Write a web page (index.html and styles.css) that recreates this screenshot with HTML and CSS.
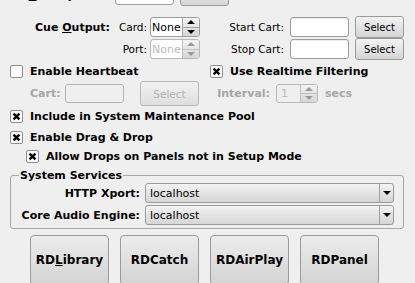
FILE: index.html
```html
<!DOCTYPE html>
<html lang="en">
<head>
    <meta charset="UTF-8">
    <title>Edit Station</title>
    <link rel="stylesheet" href="styles.css">
</head>
<body>
    <div id="stationDialog">
        <div class="row rowTop">
            <div class="fieldLabel"><u>S</u>tartup Cart:</div>
            <div class="textBox startupEdit"></div>
            <div class="pushButton startupSelect">Select</div>
        </div>
        <div class="row cueRow">
            <div class="fieldLabel">Cue <u>O</u>utput:</div>
            <div class="subLabel">Card:</div>
            <div class="spinBox cueSpin">
                <span class="spinValue">None</span>
                <span class="spinArrows"><span class="spinUp"></span><span class="spinDown"></span></span>
            </div>
            <div class="cartLabel">Start Cart:</div>
            <div class="textBox cartEdit"></div>
            <div class="pushButton cartSelect">Select</div>
        </div>
        <div class="row cueRow portRow">
            <div class="fieldLabel"></div>
            <div class="subLabel">Port:</div>
            <div class="spinBox cueSpin disabled">
                <span class="spinValue">None</span>
                <span class="spinArrows"><span class="spinUp"></span><span class="spinDown"></span></span>
            </div>
            <div class="cartLabel">Stop Cart:</div>
            <div class="textBox cartEdit"></div>
            <div class="pushButton cartSelect">Select</div>
        </div>
        <div class="row heartbeatRow">
            <div class="checkItem">
                <span class="checkBox"></span>
                <span>Enable Heartbeat</span>
            </div>
            <div class="checkItem">
                <span class="checkBox checked"><svg viewBox="0 0 13 13" width="11" height="11"><path d="M3 3 L10 10 M10 3 L3 10" /></svg></span>
                <span>Use Realtime Filtering</span>
            </div>
        </div>
        <div class="row cartRow">
            <div class="dimLabel hbCartLabel">Cart:</div>
            <div class="textBox hbCartEdit"></div>
            <div class="pushButton hbSelect disabled">Select</div>
            <div class="dimLabel intervalLabel">Interval:</div>
            <div class="spinBox intervalSpin disabled">
                <span class="spinValue">1</span>
                <span class="spinArrows"><span class="spinUp"></span><span class="spinDown"></span></span>
            </div>
            <div class="dimLabel secsLabel">secs</div>
        </div>
        <div class="row checkRow includeRow">
            <div class="checkItem">
                <span class="checkBox checked"><svg viewBox="0 0 13 13" width="11" height="11"><path d="M3 3 L10 10 M10 3 L3 10" /></svg></span>
                <span>Include in System Maintenance Pool</span>
            </div>
        </div>
        <div class="row checkRow dragRow">
            <div class="checkItem">
                <span class="checkBox checked"><svg viewBox="0 0 13 13" width="11" height="11"><path d="M3 3 L10 10 M10 3 L3 10" /></svg></span>
                <span>Enable Drag &amp; Drop</span>
            </div>
        </div>
        <div class="row checkRow allowRow">
            <div class="checkItem">
                <span class="checkBox checked"><svg viewBox="0 0 13 13" width="11" height="11"><path d="M3 3 L10 10 M10 3 L3 10" /></svg></span>
                <span>Allow Drops on Panels not in Setup Mode</span>
            </div>
        </div>
        <fieldset class="servicesGroup">
            <legend>System Services</legend>
            <div class="servicesGrid">
                <div class="serviceLabel">HTTP Xport:</div>
                <div class="comboBox"><span class="comboValue">localhost</span><span class="comboArrow"></span></div>
                <div class="serviceLabel">Core Audio Engine:</div>
                <div class="comboBox"><span class="comboValue">localhost</span><span class="comboArrow"></span></div>
            </div>
        </fieldset>
        <div class="appButtons">
            <div class="appButton">RD<u>L</u>ibrary</div>
            <div class="appButton">RDCatch</div>
            <div class="appButton">RDAirPlay</div>
            <div class="appButton">RDPanel</div>
        </div>
    </div>
</body>
</html>
```

FILE: styles.css
```css
body {
    margin: 0;
    background-color: #efefef;
    font-family: 'DejaVu Sans', 'Noto Sans', sans-serif;
    font-size: 11px;
    color: #000000;
    overflow: hidden;
}
#stationDialog {
    display: flex;
    flex-direction: column;
}
.row {
    display: flex;
    align-items: center;
}
.rowTop {
    height: 22px;
    margin-top: -16px;
}
.fieldLabel {
    width: 110px;
    text-align: right;
    font-weight: bold;
    white-space: nowrap;
}
u {
    text-underline-offset: 1px;
}
.textBox {
    box-sizing: border-box;
    height: 20px;
    background-color: #ffffff;
    border: 1px solid #9c9c9c;
    border-radius: 3px;
    box-shadow: inset 0 1px 1px rgba(0, 0, 0, 0.08);
}
.pushButton {
    box-sizing: border-box;
    display: flex;
    align-items: center;
    justify-content: center;
    height: 22px;
    font-size: 10px;
    border: 1px solid #9a9a9a;
    border-radius: 3px;
    background: linear-gradient(#f3f3f3, #d5d5d5);
}
.pushButton.disabled {
    color: #b0b0b0;
    border-color: #b8b8b8;
    background: linear-gradient(#f2f2f2, #dedede);
}
.startupEdit {
    width: 59px;
    margin-left: 5px;
}
.startupSelect {
    width: 49px;
    margin-left: 6px;
}
.cueRow {
    height: 22px;
    margin-top: 10px;
}
.portRow {
    margin-top: 0;
}
.subLabel {
    width: 37px;
    text-align: right;
    font-size: 10.5px;
}
.cartLabel {
    width: 84px;
    text-align: right;
    font-size: 10.5px;
}
.cartEdit {
    width: 59px;
    margin-left: 6px;
}
.cartSelect {
    width: 49px;
    margin-left: 6px;
}
.spinBox {
    box-sizing: border-box;
    display: flex;
    height: 20px;
    background-color: #ffffff;
    border: 1px solid #9c9c9c;
    border-radius: 3px;
    overflow: hidden;
}
.cueSpin {
    width: 50px;
    margin-left: 3px;
}
.spinValue {
    flex: 1;
    display: flex;
    align-items: center;
    padding-left: 1px;
    font-size: 11px;
    overflow: hidden;
}
.spinArrows {
    width: 16px;
    display: flex;
    flex-direction: column;
    border-left: 1px solid #a4a4a4;
    background: linear-gradient(#f4f4f4, #d6d6d6);
}
.spinUp, .spinDown {
    flex: 1;
    display: flex;
    align-items: center;
    justify-content: center;
}
.spinUp {
    border-bottom: 1px solid #a4a4a4;
}
.spinUp::before {
    content: "";
    border-left: 4px solid transparent;
    border-right: 4px solid transparent;
    border-bottom: 4px solid #000000;
}
.spinDown::before {
    content: "";
    border-left: 4px solid transparent;
    border-right: 4px solid transparent;
    border-top: 4px solid #000000;
}
.spinBox.disabled {
    border-color: #b8b8b8;
}
.spinBox.disabled .spinValue {
    color: #bcbcbc;
}
.spinBox.disabled .spinArrows {
    border-left-color: #c0c0c0;
}
.spinBox.disabled .spinUp {
    border-bottom-color: #c0c0c0;
}
.spinBox.disabled .spinUp::before {
    border-bottom-color: #9a9a9a;
}
.spinBox.disabled .spinDown::before {
    border-top-color: #9a9a9a;
}
.heartbeatRow {
    display: grid;
    grid-template-columns: 200px auto;
    height: 14px;
    margin-top: 4px;
    padding-left: 10px;
}
.checkItem {
    display: flex;
    align-items: center;
    gap: 7px;
    font-weight: bold;
    white-space: nowrap;
}
.checkBox {
    box-sizing: border-box;
    display: flex;
    align-items: center;
    justify-content: center;
    width: 13px;
    height: 13px;
    background-color: #ffffff;
    border: 1px solid #8e8e8e;
    border-radius: 2px;
}
.checkBox svg path {
    stroke: #000000;
    stroke-width: 2.8;
    fill: none;
}
.cartRow {
    height: 25px;
    margin-top: 3px;
    padding-left: 30px;
}
.dimLabel {
    font-weight: bold;
    color: #a6a6a6;
    white-space: nowrap;
}
.hbCartLabel {
    width: 35px;
}
.hbCartEdit {
    width: 59px;
    height: 19px;
    border-color: #b4b4b4;
    background-color: #efefef;
    box-shadow: none;
}
.hbSelect {
    width: 59px;
    height: 25px;
    margin-left: 16px;
    font-size: 10.5px;
}
.intervalLabel {
    width: 71px;
    text-align: right;
}
.intervalSpin {
    width: 42px;
    height: 19px;
    margin-left: 6px;
    background-color: #efefef;
}
.intervalSpin .spinValue {
    padding-left: 4px;
}
.secsLabel {
    margin-left: 7px;
}
.checkRow {
    height: 13px;
    padding-left: 10px;
}
.includeRow {
    margin-top: 4px;
}
.dragRow {
    margin-top: 8px;
}
.allowRow {
    margin-top: 6px;
    padding-left: 26px;
}
.servicesGroup {
    margin: 6px 11px 0 10px;
    padding: 1px 9px 3px;
    border: 1px solid #a8a8a8;
    border-radius: 3px;
    min-width: 0;
}
.servicesGroup legend {
    padding: 0 1px;
    margin-left: -1px;
    font-weight: bold;
    line-height: 13px;
}
.servicesGrid {
    display: grid;
    grid-template-columns: 120px 1fr;
    column-gap: 5px;
    row-gap: 2px;
    align-items: center;
}
.serviceLabel {
    text-align: right;
    font-weight: bold;
    white-space: nowrap;
}
.comboBox {
    box-sizing: border-box;
    display: flex;
    height: 20px;
    border: 1px solid #9a9a9a;
    border-radius: 3px;
    background: linear-gradient(#f3f3f3, #d6d6d6);
}
.comboValue {
    flex: 1;
    display: flex;
    align-items: center;
    padding-left: 4px;
}
.comboArrow {
    width: 13px;
    display: flex;
    align-items: center;
    justify-content: center;
    border-left: 1px solid #a0a0a0;
}
.comboArrow::before {
    content: "";
    border-left: 4px solid transparent;
    border-right: 4px solid transparent;
    border-top: 4px solid #000000;
}
.appButtons {
    display: flex;
    gap: 11px;
    margin-top: 6px;
    padding-left: 30px;
}
.appButton {
    box-sizing: border-box;
    display: flex;
    align-items: center;
    justify-content: center;
    width: 79px;
    height: 50px;
    font-size: 12px;
    font-weight: bold;
    border: 1px solid #9b9b9b;
    border-radius: 4px;
    background: linear-gradient(#ececec, #d4d4d4);
}
```
